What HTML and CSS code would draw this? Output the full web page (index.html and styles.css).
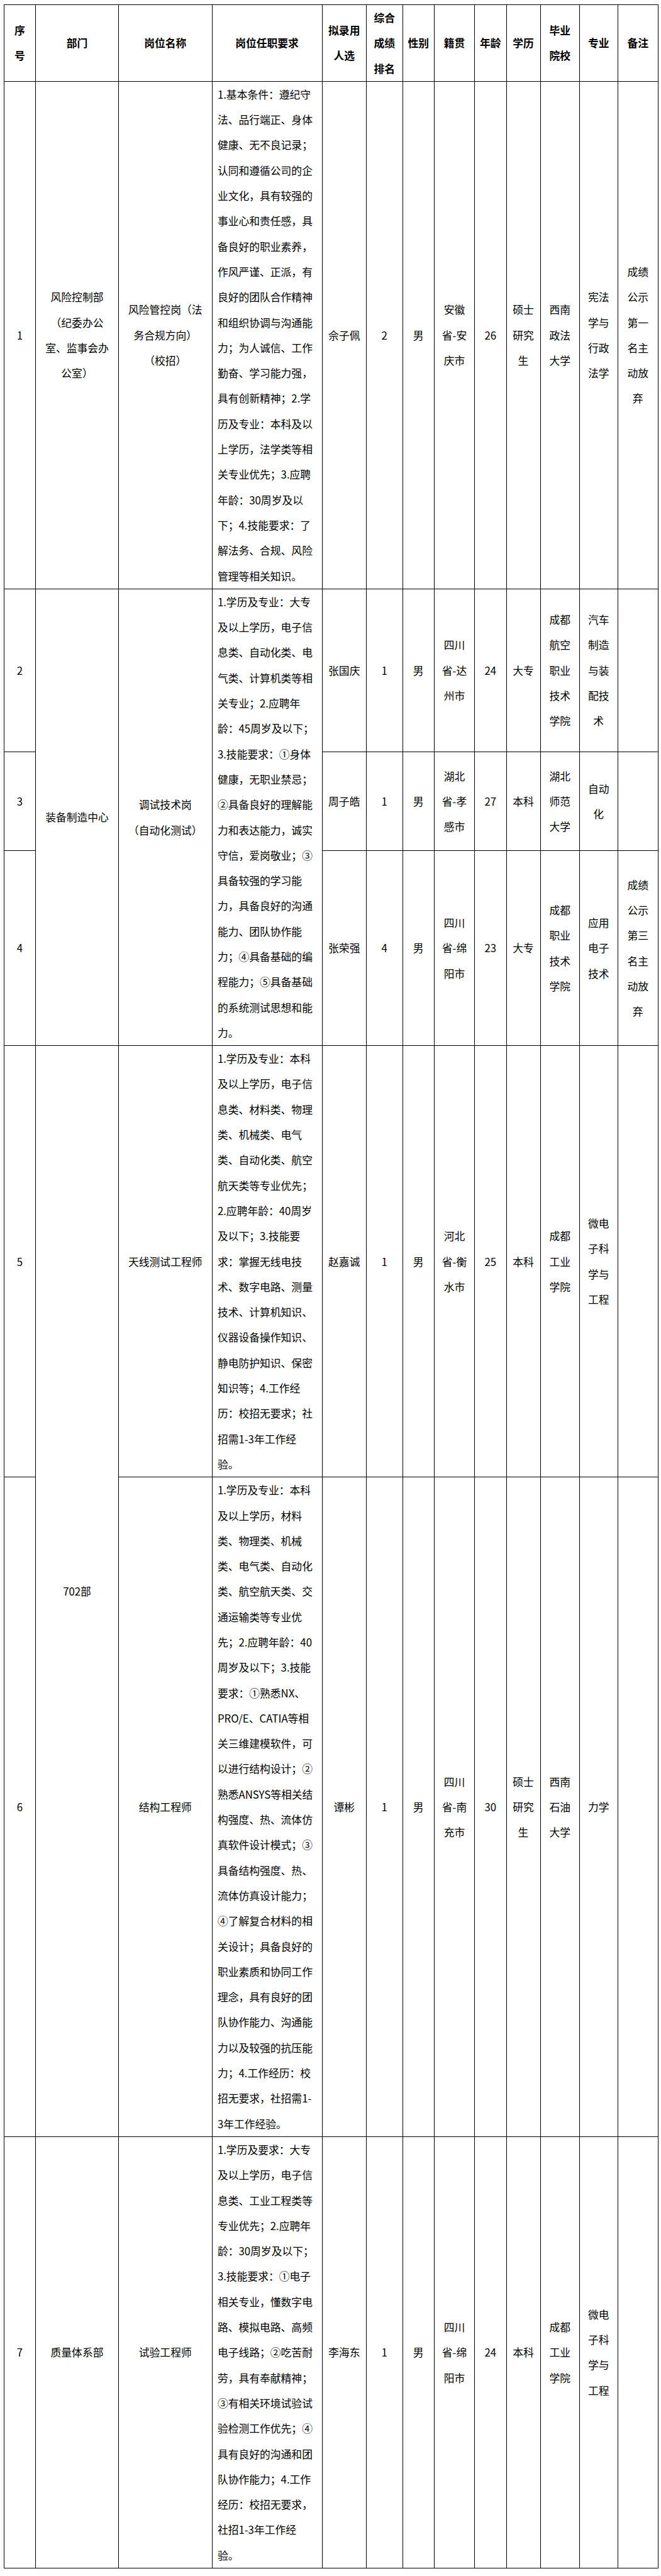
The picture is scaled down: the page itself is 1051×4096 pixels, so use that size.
FILE: index.html
```html
<!DOCTYPE html>
<html lang="zh-CN">
<head>
<meta charset="utf-8">
<title>拟录用人选公示</title>
<link rel="stylesheet" href="styles.css">
</head>
<body>
<table class="tbl">
  <colgroup>
    <col class="w-seq"><col class="w-dept"><col class="w-pos"><col class="w-req"><col class="w-name"><col class="w-rank"><col class="w-sex"><col class="w-origin"><col class="w-age"><col class="w-edu"><col class="w-school"><col class="w-major"><col class="w-note">
  </colgroup>
  <thead>
    <tr class="head">
      <th>序<br>号</th>
      <th>部门</th>
      <th>岗位名称</th>
      <th>岗位任职要求</th>
      <th>拟录用<br>人选</th>
      <th>综合<br>成绩<br>排名</th>
      <th>性别</th>
      <th>籍贯</th>
      <th>年龄</th>
      <th>学历</th>
      <th>毕业<br>院校</th>
      <th>专业</th>
      <th>备注</th>
    </tr>
  </thead>
  <tbody>
    <tr>
      <td>1</td>
      <td>风险控制部<br>（纪委办公<br>室、监事会办<br>公室）</td>
      <td>风险管控岗（法<br>务合规方向）<br>（校招）</td>
      <td class="req">1.基本条件：遵纪守<br>法、品行端正、身体<br>健康、无不良记录；<br>认同和遵循公司的企<br>业文化，具有较强的<br>事业心和责任感，具<br>备良好的职业素养，<br>作风严谨、正派，有<br>良好的团队合作精神<br>和组织协调与沟通能<br>力；为人诚信、工作<br>勤奋、学习能力强，<br>具有创新精神；2.学<br>历及专业：本科及以<br>上学历，法学类等相<br>关专业优先；3.应聘<br>年龄：30周岁及以<br>下；4.技能要求：了<br>解法务、合规、风险<br>管理等相关知识。</td>
      <td>佘子佩</td>
      <td>2</td>
      <td>男</td>
      <td>安徽<br>省-安<br>庆市</td>
      <td>26</td>
      <td>硕士<br>研究<br>生</td>
      <td>西南<br>政法<br>大学</td>
      <td>宪法<br>学与<br>行政<br>法学</td>
      <td>成绩<br>公示<br>第一<br>名主<br>动放<br>弃</td>
    </tr>
    <tr class="r2">
      <td>2</td>
      <td rowspan="3">装备制造中心</td>
      <td rowspan="3">调试技术岗<br>（自动化测试）</td>
      <td rowspan="3" class="req">1.学历及专业：大专<br>及以上学历，电子信<br>息类、自动化类、电<br>气类、计算机类等相<br>关专业；2.应聘年<br>龄：45周岁及以下；<br>3.技能要求：①身体<br>健康，无职业禁忌；<br>②具备良好的理解能<br>力和表达能力，诚实<br>守信，爱岗敬业；③<br>具备较强的学习能<br>力，具备良好的沟通<br>能力、团队协作能<br>力；④具备基础的编<br>程能力；⑤具备基础<br>的系统测试思想和能<br>力。</td>
      <td>张国庆</td>
      <td>1</td>
      <td>男</td>
      <td>四川<br>省-达<br>州市</td>
      <td>24</td>
      <td>大专</td>
      <td>成都<br>航空<br>职业<br>技术<br>学院</td>
      <td>汽车<br>制造<br>与装<br>配技<br>术</td>
      <td></td>
    </tr>
    <tr class="r3">
      <td>3</td>
      <td>周子皓</td>
      <td>1</td>
      <td>男</td>
      <td>湖北<br>省-孝<br>感市</td>
      <td>27</td>
      <td>本科</td>
      <td>湖北<br>师范<br>大学</td>
      <td>自动<br>化</td>
      <td></td>
    </tr>
    <tr class="r4">
      <td>4</td>
      <td>张荣强</td>
      <td>4</td>
      <td>男</td>
      <td>四川<br>省-绵<br>阳市</td>
      <td>23</td>
      <td>大专</td>
      <td>成都<br>职业<br>技术<br>学院</td>
      <td>应用<br>电子<br>技术</td>
      <td>成绩<br>公示<br>第三<br>名主<br>动放<br>弃</td>
    </tr>
    <tr>
      <td>5</td>
      <td rowspan="2">702部</td>
      <td>天线测试工程师</td>
      <td class="req">1.学历及专业：本科<br>及以上学历，电子信<br>息类、材料类、物理<br>类、机械类、电气<br>类、自动化类、航空<br>航天类等专业优先；<br>2.应聘年龄：40周岁<br>及以下；3.技能要<br>求：掌握无线电技<br>术、数字电路、测量<br>技术、计算机知识、<br>仪器设备操作知识、<br>静电防护知识、保密<br>知识等；4.工作经<br>历：校招无要求；社<br>招需1-3年工作经<br>验。</td>
      <td>赵嘉诚</td>
      <td>1</td>
      <td>男</td>
      <td>河北<br>省-衡<br>水市</td>
      <td>25</td>
      <td>本科</td>
      <td>成都<br>工业<br>学院</td>
      <td>微电<br>子科<br>学与<br>工程</td>
      <td></td>
    </tr>
    <tr>
      <td>6</td>
      <td>结构工程师</td>
      <td class="req">1.学历及专业：本科<br>及以上学历，材料<br>类、物理类、机械<br>类、电气类、自动化<br>类、航空航天类、交<br>通运输类等专业优<br>先；2.应聘年龄：40<br>周岁及以下；3.技能<br>要求：①熟悉NX、<br>PRO/E、CATIA等相<br>关三维建模软件，可<br>以进行结构设计；②<br>熟悉ANSYS等相关结<br>构强度、热、流体仿<br>真软件设计模式；③<br>具备结构强度、热、<br>流体仿真设计能力；<br>④了解复合材料的相<br>关设计；具备良好的<br>职业素质和协同工作<br>理念，具有良好的团<br>队协作能力、沟通能<br>力以及较强的抗压能<br>力；4.工作经历：校<br>招无要求，社招需1-<br>3年工作经验。</td>
      <td>谭彬</td>
      <td>1</td>
      <td>男</td>
      <td>四川<br>省-南<br>充市</td>
      <td>30</td>
      <td>硕士<br>研究<br>生</td>
      <td>西南<br>石油<br>大学</td>
      <td>力学</td>
      <td></td>
    </tr>
    <tr>
      <td>7</td>
      <td>质量体系部</td>
      <td>试验工程师</td>
      <td class="req">1.学历及要求：大专<br>及以上学历，电子信<br>息类、工业工程类等<br>专业优先；2.应聘年<br>龄：30周岁及以下；<br>3.技能要求：①电子<br>相关专业，懂数字电<br>路、模拟电路、高频<br>电子线路；②吃苦耐<br>劳，具有奉献精神；<br>③有相关环境试验试<br>验检测工作优先；④<br>具有良好的沟通和团<br>队协作能力；4.工作<br>经历：校招无要求，<br>社招1-3年工作经<br>验。</td>
      <td>李海东</td>
      <td>1</td>
      <td>男</td>
      <td>四川<br>省-绵<br>阳市</td>
      <td>24</td>
      <td>本科</td>
      <td>成都<br>工业<br>学院</td>
      <td>微电<br>子科<br>学与<br>工程</td>
      <td></td>
    </tr>
  </tbody>
</table>
</body>
</html>
```

FILE: styles.css
```css
html, body {
  margin: 0;
  padding: 0;
  background: #ffffff;
}

body {
  font-family: "Noto Sans CJK SC", "Noto Sans", sans-serif;
  color: #000000;
  font-size: 16.8px;
  line-height: 40.3px;
}

.tbl {
  margin: 7px 0 0 6px;
  border-collapse: collapse;
  table-layout: fixed;
  width: 1040px;
}

.w-seq { width: 50px; }
.w-dept { width: 132px; }
.w-pos { width: 148.5px; }
.w-req { width: 175px; }
.w-name { width: 70.5px; }
.w-rank { width: 57.5px; }
.w-sex { width: 50.5px; }
.w-origin { width: 64px; }
.w-age { width: 50.5px; }
.w-edu { width: 54px; }
.w-school { width: 62.5px; }
.w-major { width: 60.5px; }
.w-note { width: 64.5px; }

.tbl th,
.tbl td {
  border: 1px solid #000000;
  padding: 0 4px;
  text-align: center;
  vertical-align: middle;
  white-space: nowrap;
  overflow: visible;
}

.tbl th {
  font-weight: 700;
  line-height: 40.3px;
}

.tbl td.req {
  text-align: left;
  padding: 0 4px 0 8.4px;
}

.r2 { height: 259px; }
.r3 { height: 157px; }
.r4 { height: 310px; }
```
